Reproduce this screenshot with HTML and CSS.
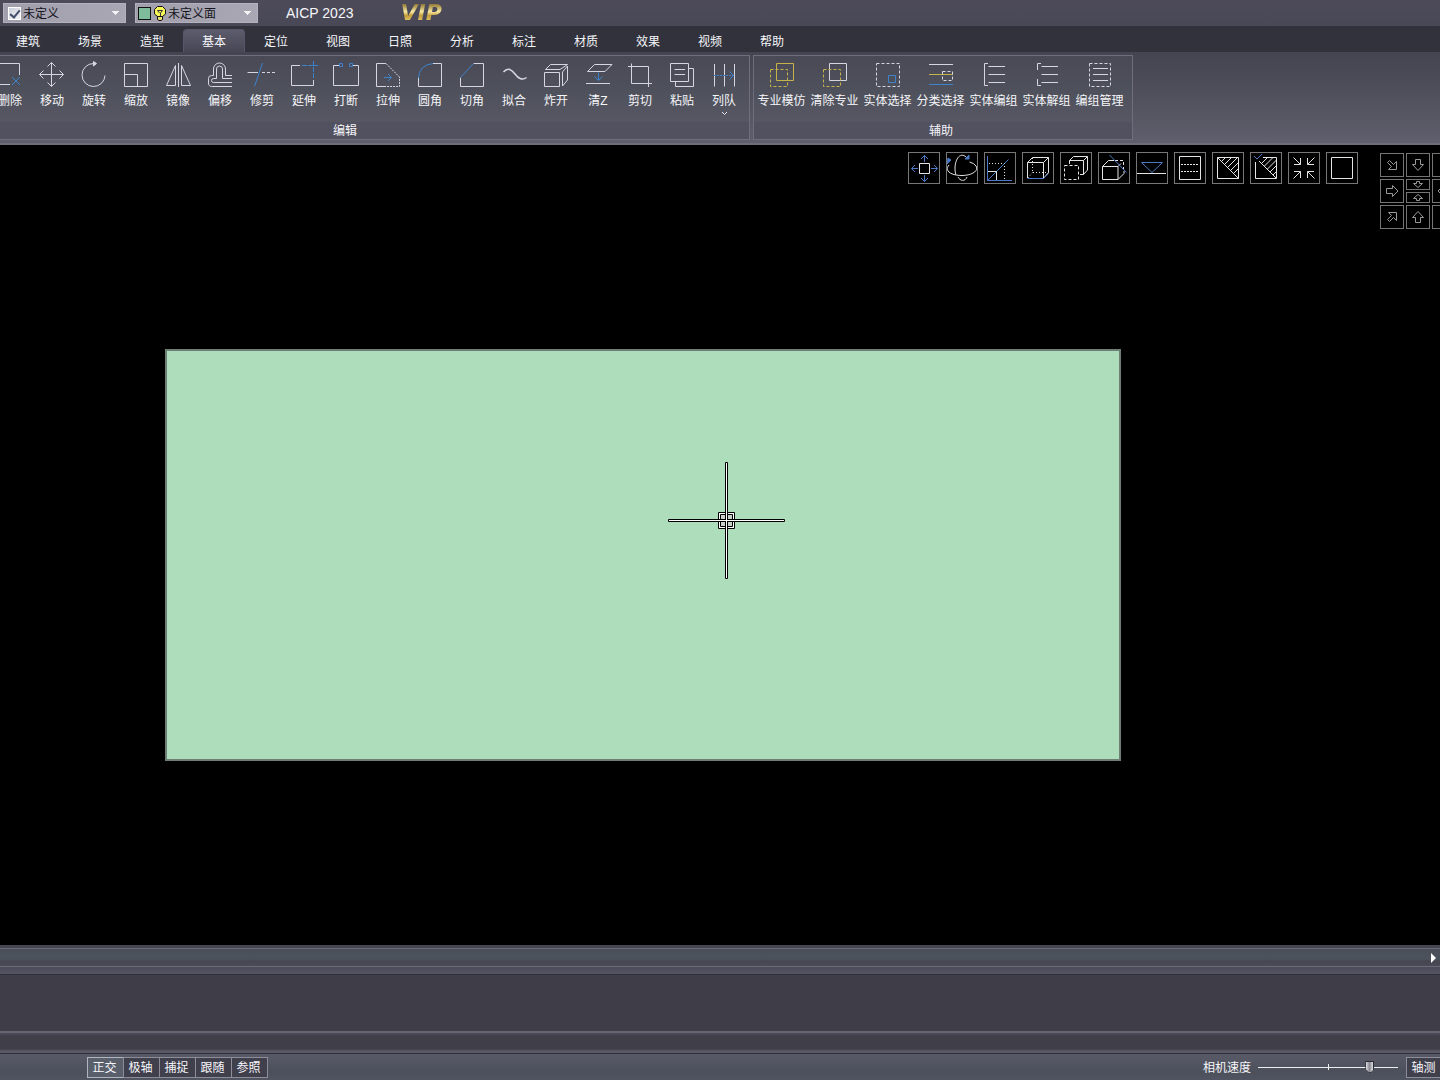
FILE: index.html
```html
<!DOCTYPE html>
<html lang="zh-CN">
<head>
<meta charset="utf-8">
<title>AICP 2023</title>
<link rel="stylesheet" href="styles.css">
</head>
<body>
<div class="app">
  <header class="titlebar">
    <div class="combo">
      <input class="combo-check" type="checkbox" aria-label="图层可见" checked>
      <select class="combo-select" aria-label="图层"><option>未定义</option></select>
    </div>
    <div class="combo">
      <span class="swatch"></span>
      <svg class="bulb" width="14" height="15" viewBox="0 0 14 15"><path d="M4.500 10.500 1.500 8V3.500L4.500 .5h5l3 3V8l-3 2.500z" fill="#f6f65a" stroke="#111"/><path d="M4.500 10.500h5v3l-1.500 1h-2l-1.500-1z" fill="#eee36a" stroke="#111"/><path d="M4.500 4.500h5L7.500 7v3M4.500 4.500l2 2.500" fill="none" stroke="#333"/></svg>
      <select class="combo-select" aria-label="面"><option>未定义面</option></select>
    </div>
    <span class="app-name">AICP 2023</span>
    <span class="vip">VIP</span>
  </header>

  <nav class="tabs">
    <button class="tab">建筑</button><button class="tab">场景</button><button class="tab">造型</button><button class="tab active">基本</button><button class="tab">定位</button><button class="tab">视图</button><button class="tab">日照</button><button class="tab">分析</button><button class="tab">标注</button><button class="tab">材质</button><button class="tab">效果</button><button class="tab">视频</button><button class="tab">帮助</button>
  </nav>

  <div class="ribbon">
    <section class="group group-edit">
      <div class="tools">
        <button class="tool"><svg class="icon" viewBox="0 0 28 28"><path d="M0 2.500H23.500V14M0 23.500H14"/><path class="blue" d="M16 16l8 8M24 16l-8 8"/></svg>删除</button>
        <button class="tool"><svg class="icon" viewBox="0 0 28 28"><path d="M13.500 1.500v24M1.500 13.500h24M9.500 5.500l4-4 4 4M9.500 21.500l4 4 4-4M5.500 9.500l-4 4 4 4M21.500 9.500l4 4-4 4"/></svg>移动</button>
        <button class="tool"><svg class="icon" viewBox="0 0 28 28"><path d="M25 14.500A11.500 11.500 0 1 1 13.500 2.500"/><path class="solid" d="M13.500 .5 16.500 2.500 13.500 5z"/></svg>旋转</button>
        <button class="tool"><svg class="icon" viewBox="0 0 28 28"><path d="M2.500 2.500h23v23h-23zM2.500 13.500h13v12"/></svg>缩放</button>
        <button class="tool"><svg class="icon" viewBox="0 0 28 28"><path d="M2.500 24.500 11.500 4.500v20zM14.500 2v24M17.500 24.500v-20l9 20z"/></svg>镜像</button>
        <button class="tool"><svg class="icon" viewBox="0 0 28 28"><path d="M26 14.500H19.500V8a6 6 0 0 0-12 0V14.500H5.500a3 3 0 0 0-3 3V22a3 3 0 0 0 3 3.500H26"/><path d="M26 17.500H16.500V8a3 3 0 0 0-6 0V17.500H7.500a2 2 0 0 0 0 4H26"/></svg>偏移</button>
        <button class="tool"><svg class="icon" viewBox="0 0 28 28"><path d="M-.5 11.500H10"/><path class="dash" d="M14 11.500H29"/><path class="blue" d="M14.500 2 6.500 25.500"/></svg>修剪</button>
        <button class="tool"><svg class="icon" viewBox="0 0 28 28"><path d="M10 4.500H1.500v20h22V19"/><path class="blue long" d="M12 4.500H28M23.500 0V17"/></svg>延伸</button>
        <button class="tool"><svg class="icon" viewBox="0 0 28 28"><path d="M7 4.500H1.500v20h25v-20H21"/><path class="blue" d="M7.500 2.500h3v3h-3zM17.500 2.500h3v3h-3z"/></svg>打断</button>
        <button class="tool"><svg class="icon" viewBox="0 0 28 28"><path d="M12 2.500H2.500v23H12"/><path class="short" d="M12 2.500 25.500 16V25.500H12"/><path class="blue" d="M10 16.500h7M14 13l3.500 3.500L14 20"/></svg>拉伸</button>
        <button class="tool"><svg class="icon" viewBox="0 0 28 28"><path d="M2.500 16v9.500h23v-23H17"/><path class="blue" d="M2.500 17Q3 4 17 2.500"/></svg>圆角</button>
        <button class="tool"><svg class="icon" viewBox="0 0 28 28"><path d="M2.500 16.500v9h23v-23h-10"/><path class="blue" d="M2.500 16.500l13-14"/></svg>切角</button>
        <button class="tool"><svg class="icon" viewBox="0 0 28 28"><path d="M3.500 11C8 5.500 12 9 15 13s7 7 11.500 3.500" stroke-width="1.500"/></svg>拟合</button>
        <button class="tool"><svg class="icon" viewBox="0 0 28 28"><path d="M2.500 11.500h15v14h-15zM3.500 8.500l5-5h17l-7.500 5zM20.500 11l5-6v14l-5 6z"/></svg>炸开</button>
        <button class="tool"><svg class="icon" viewBox="0 0 28 28"><path d="M3.500 10.500l7-7H28l-7 7zM2 22.500h24"/><path class="blue" d="M14.500 11.500v8M10.500 15.500l4 4 4-4"/></svg>清Z</button>
        <button class="tool"><svg class="icon" viewBox="0 0 28 28"><path d="M5.500 2.500v20H26M2 5.500h20.500V26"/></svg>剪切</button>
        <button class="tool"><svg class="icon" viewBox="0 0 28 28"><path d="M2.500 2.500h18v18h-18zM6.500 8.500h10.500M6.500 13.500h10.500M20.500 7.500h5v18h-18v-5"/></svg>粘贴</button>
        <button class="tool"><svg class="icon" viewBox="0 0 28 28"><path d="M4.500 3v22.500M14.500 3v22.500M24.500 3v22.500"/><path class="blue short" d="M4 14.500h19"/><path class="blue" d="M19.500 10.500l4 4-4 4"/></svg>列队<svg class="more" width="7" height="5" viewBox="0 0 7 5"><path d="M1 1l2.500 2.500L6 1" fill="none" stroke="#e8e8f0"/></svg></button>
      </div>
      <div class="group-label">编辑</div>
    </section>
    <section class="group group-assist">
      <div class="tools">
        <button class="tool wide"><svg class="icon" viewBox="0 0 27 28"><path class="gold" d="M8.500 2.500h17v17h-17z"/><path class="gold dash" d="M2.500 8.500h17v17h-17z"/></svg>专业模仿</button>
        <button class="tool wide"><svg class="icon" viewBox="0 0 27 28"><path d="M8.500 2.500h17v17h-17z"/><path class="gold dash" d="M2.500 8.500h17v17h-17z"/></svg>清除专业</button>
        <button class="tool wide"><svg class="icon" viewBox="0 0 27 28"><path class="dash" d="M2.500 2.500h23v23h-23z"/><path class="blue" d="M14.500 14.500h7v7h-7z"/></svg>实体选择</button>
        <button class="tool wide"><svg class="icon" viewBox="0 0 27 28"><path d="M2 3.500h24"/><path class="gold" d="M2 13.500h24"/><path class="blue" d="M2 23.500h24"/><path class="dash" d="M15.500 10.500h10v9h-10z"/></svg>分类选择</button>
        <button class="tool wide"><svg class="icon" viewBox="0 0 27 28"><path d="M8 2.500H4.500v22H8M8.500 5.500H25M8.500 13.500H25M8.500 21.500H25"/></svg>实体编组</button>
        <button class="tool wide"><svg class="icon" viewBox="0 0 27 28"><path d="M8 2.500H4.500V9M4.500 18v6.500H8M8.500 5.500H25M8.500 13.500H25M8.500 21.500H25"/></svg>实体解组</button>
        <button class="tool wide"><svg class="icon" viewBox="0 0 27 28"><path class="dash" d="M3.500 2.500h21v23h-21z"/><path d="M7 7.500h15M7 13.500h15M7 19.500h15"/></svg>编组管理</button>
      </div>
      <div class="group-label">辅助</div>
    </section>
  </div>

  <main class="canvas">
    <div class="view-bar">
      <div class="view-tools">
        <button class="view-btn" aria-label="平移"><svg viewBox="0 0 30 30"><path d="M10.500 10.500h10v10h-10z"/><path class="vblue" d="M15.500 9V2.500M12 6l3.500-3.500L19 6M15.500 22v6.500M12 25l3.500 3.500L19 25M9 15.500H2.500M6 12l-3.500 3.500L6 19M22 15.500h6.500M25 12l3.500 3.500L25 19"/></svg></button>
        <button class="view-btn" aria-label="旋转视图"><svg viewBox="0 0 30 30"><path d="M2 12C-3 18 4 22.500 15 22.500S32 17 29 13Q27 10 22.500 9M20 5C15-1 9 3 8 14c0 3 0 5 1 8M11 24c2 4 7 5 9 0"/><path class="vblue fill" d="M18 6h4V2zM0 11l1-6 3 2z"/></svg></button>
        <button class="view-btn" aria-label="缩放视图"><svg viewBox="0 0 30 30"><path class="vblue" d="M2.500 3v24.500H27M2.500 27.500l21-21"/><path class="dot" d="M4 10.500h15.500V27"/><path d="M3 18.500h8.500V27"/></svg></button>
        <button class="view-btn" aria-label="透视"><svg viewBox="0 0 30 30"><path d="M4.500 25V9.500h16V25M4.500 9.500l5-5h16v15l-5 6M20.500 9.500l5-5"/><path class="dot" d="M9.500 5v14.500h16M9.500 19.500l-5 6"/><path class="vblue" d="M4.500 25.500h16l5-5"/></svg></button>
        <button class="view-btn" aria-label="遮挡"><svg viewBox="0 0 30 30"><path class="dash" d="M3.500 12.500h14v14h-14z"/><path d="M8.500 11V7.500h14v14H19M8.500 7.500l4-4h14V17l-4 4.500M22.500 7.500l4-4"/></svg></button>
        <button class="view-btn" aria-label="剖切"><svg viewBox="0 0 30 30"><path d="M3.500 13.500h15.500v13H3.500zM3.500 13.500l6-6H15M19 26.500l6-6V18M19 13.500l3-3"/><path class="dash" d="M16 7.500h8.500V18"/><path class="vblue" d="M10.500 2 27.500 19.500"/></svg></button>
        <button class="view-btn" aria-label="标高"><svg viewBox="0 0 30 30"><path class="vblue" d="M4.500 9.500h21l-10.500 10z"/><path d="M0 20.500h29"/></svg></button>
        <button class="view-btn" aria-label="虚线"><svg viewBox="0 0 30 30"><path d="M4.500 3.500h21v23h-21z"/><path class="short" d="M6 11.500h18M6 18.500h18"/></svg></button>
        <button class="view-btn" aria-label="填充"><svg viewBox="0 0 30 30"><path d="M4.500 4.500h21v21h-21zM4.500 4.500l21 21M9 8l3-3M12 11l6-6M15 14l9-9M18 17l7-7M21 20l4-4"/></svg></button>
        <button class="view-btn" aria-label="填充选择"><svg viewBox="0 0 30 30"><path d="M12 4.500h13.500v21h-21V9M8 8l17 17M11 10l5-5M13.500 13l8-8M16.500 16l9-9M19 19l6-6M22 22l3-3"/><path class="vblue" d="M3 3l3 3 5-5"/></svg></button>
        <button class="view-btn" aria-label="收缩"><svg viewBox="0 0 30 30"><path d="M4.500 4.500l7 7M5 11.500h6.500V5M25.500 4.500l-7 7M25 11.500h-6.500V5M4.500 25.500l7-7M5 18.500h6.500V25M25.500 25.500l-7-7M25 18.500h-6.500V25"/></svg></button>
        <button class="view-btn" aria-label="全屏"><svg viewBox="0 0 30 30"><path d="M4.500 4.500h21v21h-21z"/></svg></button>
      </div>
      <div class="nav-pad">
        <button class="nav-btn" aria-label="左上"><svg viewBox="0 0 22 22"><path d="M6.500 8.500l2-2 4 4 3-3v8h-8l3-3z"/></svg></button>
        <button class="nav-btn" aria-label="上"><svg viewBox="0 0 22 22"><path d="M8.500 5.500h5v5h3l-5.500 6-5.500-6h3z"/></svg></button>
        <button class="nav-btn" aria-label="右上"></button>
        <button class="nav-btn" aria-label="左"><svg viewBox="0 0 22 22"><path d="M5.500 8.500h6v-3l5.500 5.500-5.500 5.500v-3h-6z"/></svg></button>
        <div class="nav-split">
          <button class="nav-half" aria-label="降低"><svg viewBox="0 0 22 9"><path d="M9.500 1.500h3v2h3L11 7.500 6.500 3.500h3z"/></svg></button>
          <button class="nav-half" aria-label="升高"><svg viewBox="0 0 22 9"><path d="M9.500 7.500h3v-2h3L11 1.500 6.500 5.500h3z"/></svg></button>
        </div>
        <button class="nav-btn" aria-label="右"><svg viewBox="0 0 22 22"><path d="M16.500 8.500h-6v-3L5 11l5.500 5.500v-3h6z"/></svg></button>
        <button class="nav-btn" aria-label="左下"><svg viewBox="0 0 22 22"><path d="M6.500 13.500l2 2 4-4 3 3v-8h-8l3 3z"/></svg></button>
        <button class="nav-btn" aria-label="下"><svg viewBox="0 0 22 22"><path d="M8.500 16.500h5v-5h3L11 5.500l-5.500 6h3z"/></svg></button>
        <button class="nav-btn" aria-label="右下"></button>
      </div>
    </div>
    <div class="face"></div>
    <svg class="cursor" width="117" height="117" viewBox="0 0 117 117">
      <path d="M50.500 50.500h16v16h-16z" fill="#fff" stroke="#000"/>
      <path d="M52.500 52.500h12v12h-12z" fill="#c9cfc9" stroke="#000"/>
      <path d="M57.500 .5h2v116h-2zM.5 57.500h116v2H.5z" fill="#fff" stroke="#000"/>
      <path d="M58 56h1v5h-1zM56 58h5v1h-5z" fill="#fff"/>
    </svg>
  </main>

  <div class="scrollbar"><button class="scroll-next" aria-label="向右滚动"></button></div>
  <div class="history"></div>
  <div class="command"></div>

  <footer class="status">
    <div class="modes">
      <button class="mode on">正交</button><button class="mode">极轴</button><button class="mode">捕捉</button><button class="mode">跟随</button><button class="mode">参照</button>
    </div>
    <div class="camera">
      <label for="speed">相机速度</label>
      <input class="speed" id="speed" type="range" min="0" max="100" value="82">
      <button class="mode axis">轴测</button>
    </div>
  </footer>
</div>
</body>
</html>
```
FILE: styles.css
```css
* { box-sizing: border-box; }

body {
  margin: 0;
  background: #000;
  color: #f6f6fa;
  font: 12px/16px "Liberation Sans", "Noto Sans CJK SC", sans-serif;
}

button, select, input { font: inherit; color: inherit; }

button {
  margin: 0;
  padding: 0;
  border: 0;
  background: none;
}

.app {
  display: flex;
  flex-direction: column;
  min-height: 100vh;
  overflow: hidden;
}

/* title bar */
.titlebar {
  display: flex;
  align-items: center;
  height: 26px;
  padding-left: 3px;
  background: linear-gradient(#4d4b59, #494856);
}

.combo {
  display: flex;
  align-items: center;
  width: 123px;
  height: 20px;
  margin-right: 9px;
  padding-left: 4px;
  border: 1px solid #b3b1bd;
  background: linear-gradient(90deg, #a19fac, #a9a7b3);
  color: #14141c;
}

.combo-check {
  appearance: none;
  display: grid;
  place-items: center;
  width: 13px;
  height: 13px;
  margin: 0 2px 0 0;
  border: 1px solid #fff;
  background: linear-gradient(135deg, #ccd0d8, #f4f4f6);
}

.combo-check:checked::before {
  content: "";
  width: 4px;
  height: 8px;
  margin-bottom: 2px;
  border: solid #42506c;
  border-width: 0 2px 2px 0;
  transform: rotate(40deg);
}

.combo-select {
  flex: 1;
  min-width: 0;
  height: 18px;
  padding: 2px 0 0;
  border: 0;
  appearance: none;
  background:
    linear-gradient(to bottom left, #f3f3f6 50%, transparent 50%) right 9px center / 4px 4px no-repeat,
    linear-gradient(to bottom right, #f3f3f6 50%, transparent 50%) right 5px center / 4px 4px no-repeat;
}

.swatch {
  width: 13px;
  height: 13px;
  margin-left: -2px;
  border: 1px solid #111;
  background: #7fbc9b;
}

.bulb { margin: 0 1px 0 2px; }

.app-name {
  margin-left: 19px;
  font-size: 14px;
}

.vip {
  margin-left: 47px;
  padding-right: 4px;
  font: italic bold 22px/26px "DejaVu Sans", sans-serif;
  background: linear-gradient(#8f7433 15%, #f7e9a0 45%, #c69c3b 60%, #e9cf74 85%);
  -webkit-background-clip: text;
  background-clip: text;
  color: transparent;
}

/* tabs */
.tabs {
  display: flex;
  height: 26px;
  padding: 3px 0 0 1px;
  margin-left: -4px;
  background: #31323c;
}

.tab {
  flex: none;
  width: 62px;
  height: 23px;
  padding-top: 2px;
}

.tab.active {
  border: 1px solid #57566a;
  border-bottom: 0;
  border-radius: 4px 4px 0 0;
  background: linear-gradient(#5d5c6d, #474654);
}

/* ribbon */
.ribbon {
  display: flex;
  gap: 3px;
  padding: 3px 0;
  border-bottom: 2px solid #6e6d7c;
  background: linear-gradient(#454451, #4d4e5a 40%, #605f6d);
  overflow: hidden;
}

.group {
  flex: none;
  display: flex;
  flex-direction: column;
  height: 85px;
  border: 1px solid #6f6e7d;
  background: linear-gradient(#4a4956, #4d505a 35%, #5b5a68);
}

.group-edit {
  margin-left: -60px;
  padding-left: 48px;
  width: 810px;
}

.group-assist { width: 380px; padding-left: 1px; }

.tools { display: flex; flex: 1; }

.tool {
  flex: none;
  display: flex;
  flex-direction: column;
  align-items: center;
  width: 42px;
  padding-top: 5px;
  white-space: nowrap;
}

.tool.wide { width: 53px; }

.icon {
  flex: none;
  width: 28px;
  height: 28px;
  margin-bottom: 4px;
  overflow: visible;
  fill: none;
  stroke: #d5d6e2;
}

.wide .icon { width: 27px; }

.more { margin-top: 2px; }

.blue { stroke: #3f82cc; }
.gold { stroke: #c5b34a; }
.solid { fill: #d5d6e2; }
.dash { stroke-dasharray: 3 2; }
.dot { stroke-dasharray: 1 2; }
.short { stroke-dasharray: 2 1; }
.long { stroke-dasharray: 5 1; }

.group-label {
  height: 17px;
  margin-left: -48px;
  background: #52515f;
  line-height: 18px;
  text-align: center;
}

.group-assist .group-label { margin-left: -1px; padding-right: 4px; }

/* drawing area */
.canvas {
  position: relative;
  flex: 1;
  overflow: hidden;
  background: #000;
}

.view-bar {
  display: flex;
  justify-content: flex-end;
  gap: 22px;
  padding-top: 7px;
}

.view-tools { display: flex; gap: 6px; }

.view-btn {
  width: 32px;
  height: 32px;
  border: 1px solid #777;
}

.view-btn svg {
  display: block;
  width: 30px;
  height: 30px;
  fill: none;
  stroke: #e4e4e4;
}

.view-btn .vblue { stroke: #4b78c4; }
.view-btn .fill { fill: #4b78c4; }

.nav-pad {
  display: grid;
  grid-template-columns: repeat(3, 24px);
  grid-auto-rows: 24px;
  gap: 2px;
  width: 60px;
  padding-top: 1px;
}

.nav-btn, .nav-half { border: 1px solid #757575; }

.nav-btn svg, .nav-half svg {
  display: block;
  width: 22px;
  fill: none;
  stroke: #9a9a9a;
}

.nav-split {
  display: grid;
  grid-template-rows: 11px 11px;
  gap: 2px;
}

.face {
  position: absolute;
  left: 165px;
  top: 204px;
  width: 956px;
  height: 412px;
  border: 2px solid #6f7f76;
  background: #aeddbc;
}

.cursor {
  position: absolute;
  left: 668px;
  top: 317px;
}

/* lower panels */
.scrollbar {
  display: flex;
  justify-content: flex-end;
  align-items: center;
  height: 30px;
  padding: 0 4px 4px 0;
  border-bottom: 1px solid #32313b;
  background: linear-gradient(#454552 3px, #6b6b78 3px, #6b6b78 4px, #4b4e59 4px, #4c535d 14px, #464652 16px, #4b4a57 21px, #6b6a78 21px, #6b6a78 22px, #4c4b58 22px, #545361 28px);
}

.scroll-next {
  border: solid transparent;
  border-width: 5px 0 5px 5px;
  border-left-color: #fff;
}

.history {
  height: 56px;
  background: #3e3d48;
}

.command {
  height: 23px;
  border-top: 2px solid #666573;
  border-bottom: 1px solid #2f2e38;
  background: linear-gradient(#4d4c59, #3f3e49 3px, #3f3e49 16px, #5a5967 18px);
}

.status {
  display: flex;
  justify-content: space-between;
  align-items: center;
  height: 26px;
  padding-left: 87px;
  background: linear-gradient(#595a68, #4b505b 70%, #515461);
}

.modes, .camera { display: flex; align-items: center; }

.camera label { padding-top: 1px; }

.mode {
  width: 37px;
  height: 21px;
  margin-right: -1px;
  padding: 1px 2px 0 0;
  border: 1px solid #8d8c99;
  background: #403f4c;
}

.mode.on {
  border-color: #b0b5be;
  background: #59606c;
}

.mode.axis { margin-right: -3px; }

.speed {
  appearance: none;
  width: 140px;
  height: 16px;
  margin: 0 8px 0 7px;
  background:
    linear-gradient(#eee, #eee) center / 1px 6px no-repeat,
    linear-gradient(#eee, #eee) center / 100% 1px no-repeat;
}

.speed::-webkit-slider-thumb {
  appearance: none;
  width: 9px;
  height: 12px;
  border: 1px solid #2a2a33;
  background: linear-gradient(90deg, #dcdce2, #8b8b95, #dcdce2);
  clip-path: polygon(0 0, 100% 0, 100% 65%, 50% 100%, 0 65%);
}
```
